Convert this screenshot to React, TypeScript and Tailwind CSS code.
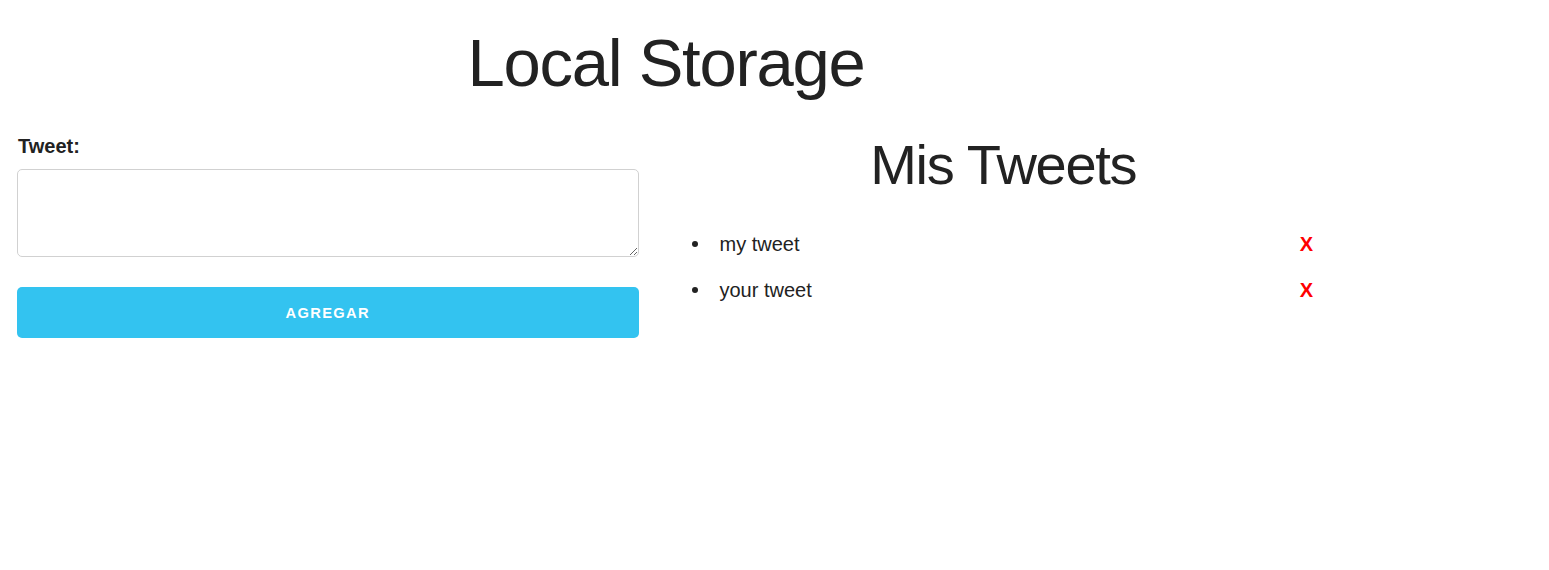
import { useState } from 'react';

const font = { fontFamily: '"Liberation Sans", Arial, sans-serif' };

export default function App() {
  const [tweets, setTweets] = useState<string[]>(['my tweet', 'your tweet']);
  const [text, setText] = useState('');

  const addTweet = () => {
    if (!text.trim()) return;
    setTweets([...tweets, text.trim()]);
    setText('');
  };

  return (
    <div className="min-h-[570px] bg-white text-[#222]" style={font}>
      <div className="ml-[17px] w-[1298px] pt-[23px]">
        <h1 className="text-center text-[67px] leading-[1.2] font-normal tracking-[-1.25px] mb-[27px]">
          Local Storage
        </h1>

        <div className="flex gap-[52px]">
          <form
            className="w-[622px]"
            onSubmit={(e) => {
              e.preventDefault();
              addTweet();
            }}
          >
            <label htmlFor="tweet" className="block text-[20px] leading-[32px] font-bold pl-px mb-[7px]">
              Tweet:
            </label>
            <textarea
              id="tweet"
              value={text}
              onChange={(e) => setText(e.target.value)}
              className="block w-full h-[88px] border border-[#d1d1d1] rounded-[5px] px-[13px] py-[8px] text-[20px] outline-none focus:border-[#33c3f0]"
            />
            <button
              type="submit"
              className="mt-[30px] w-full h-[51px] rounded-[5px] bg-[#33c3f0] text-white text-[14.7px] font-bold uppercase tracking-[1.35px] hover:bg-[#1eaedb]"
            >
              Agregar
            </button>
          </form>

          <div className="ml-px w-[624px]">
            <h2 className="text-center text-[56px] leading-[70px] font-normal tracking-[-1.3px] mb-[28px]">
              Mis Tweets
            </h2>
            <ul>
              {tweets.map((t, i) => (
                <li key={i} className="flex items-center text-[20px] leading-[32px] mb-[14px]">
                  <span className="mr-[22px] h-[6px] w-[6px] rounded-full bg-[#222]" />
                  <span className="flex-1">{t}</span>
                  <button
                    type="button"
                    onClick={() => setTweets(tweets.filter((_, j) => j !== i))}
                    className="mr-[2px] font-bold text-[#ff0000] text-[20px]"
                  >
                    X
                  </button>
                </li>
              ))}
            </ul>
          </div>
        </div>
      </div>
    </div>
  );
}
